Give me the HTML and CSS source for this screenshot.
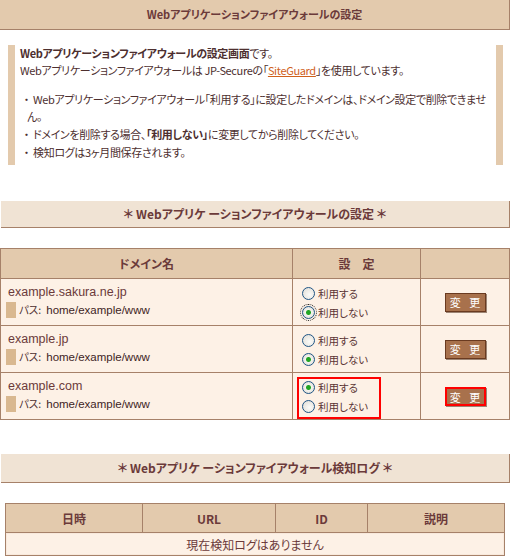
FILE: index.html
```html
<!DOCTYPE html>
<html lang="ja">
<head>
    <meta charset="UTF-8">
    <title>Webアプリケーションファイアウォールの設定</title>
    <link rel="stylesheet" href="styles.css">
</head>
<body>
    <div class="page-title">Webアプリケーションファイアウォールの設定</div>

    <div class="notice">
        <p><strong>Webアプリケーションファイアウォールの設定画面</strong>です。<br>
        Webアプリケーションファイアウォールは JP-Secureの「<a href="#">SiteGuard</a>」を使用しています。</p>
        <ul>
            <li>Webアプリケーションファイアウォール「利用する」に設定したドメインは、ドメイン設定で削除できません。</li>
            <li>ドメインを削除する場合、<strong>「利用しない」</strong>に変更してから削除してください。</li>
            <li>検知ログは3ヶ月間保存されます。</li>
        </ul>
    </div>

    <div class="section-title">＊ Webアプリケ ーションファイアウォールの設定 ＊</div>

    <table class="domain-table">
        <thead>
            <tr>
                <th class="col-domain">ドメイン名</th>
                <th class="col-setting">設　定</th>
                <th class="col-action"></th>
            </tr>
        </thead>
        <tbody>
            <tr>
                <td class="domain">
                    <div class="domain-name">example.sakura.ne.jp</div>
                    <div class="domain-path"><span class="mark"></span>パス: <span class="path">home/example/www</span></div>
                </td>
                <td class="setting">
                    <div class="choice">
                        <label><input type="radio" name="waf1">利用する</label>
                        <label><input type="radio" name="waf1" class="focused" checked>利用しない</label>
                    </div>
                </td>
                <td class="action"><button>変 更</button></td>
            </tr>
            <tr>
                <td class="domain">
                    <div class="domain-name">example.jp</div>
                    <div class="domain-path"><span class="mark"></span>パス: <span class="path">home/example/www</span></div>
                </td>
                <td class="setting">
                    <div class="choice">
                        <label><input type="radio" name="waf2">利用する</label>
                        <label><input type="radio" name="waf2" checked>利用しない</label>
                    </div>
                </td>
                <td class="action"><button>変 更</button></td>
            </tr>
            <tr>
                <td class="domain">
                    <div class="domain-name">example.com</div>
                    <div class="domain-path"><span class="mark"></span>パス: <span class="path">home/example/www</span></div>
                </td>
                <td class="setting">
                    <div class="choice marked">
                        <label><input type="radio" name="waf3" checked>利用する</label>
                        <label><input type="radio" name="waf3">利用しない</label>
                    </div>
                </td>
                <td class="action"><button class="marked">変 更</button></td>
            </tr>
        </tbody>
    </table>

    <div class="section-title log-title">＊ Webアプリケ ーションファイアウォール検知ログ ＊</div>

    <table class="log-table">
        <thead>
            <tr>
                <th class="col-date">日時</th>
                <th class="col-url">URL</th>
                <th class="col-id">ID</th>
                <th>説明</th>
            </tr>
        </thead>
        <tbody>
            <tr>
                <td colspan="4">現在検知ログはありません</td>
            </tr>
        </tbody>
    </table>
</body>
</html>
```

FILE: styles.css
```css
body {
    margin: 0;
    width: 510px;
    font-family: "Noto Sans CJK JP", sans-serif;
    font-feature-settings: "palt";
    font-size: 12px;
    color: #6b3a3a;
    background: #fff;
}
.page-title {
    height: 29px;
    line-height: 29px;
    background-color: #e3caad;
    border-bottom: 1px solid #a68169;
    border-right: 1px solid #a68169;
    text-align: center;
    font-weight: bold;
    font-size: 11px;
}
.notice {
    margin: 15px 7px 0 8px;
    border-left: 7px solid #e3caad;
    border-right: 7px solid #e3caad;
    padding: 0 2px 4px 5px;
    line-height: 17px;
    font-size: 11px;
    letter-spacing: -0.35px;
    color: #4d2f2f;
}
.notice p {
    margin: 0;
}
.notice a {
    color: #d0611c;
}
.notice ul {
    list-style: none;
    margin: 12px 0 0;
    padding: 0 0 0 7px;
}
.notice li {
    text-indent: -6px;
}
.notice li + li {
    margin-top: 1px;
}
.notice li::before {
    content: "・";
    display: inline-block;
    width: 12px;
    text-indent: 0;
    font-feature-settings: normal;
}
.section-title {
    margin: 36px 0 0 1px;
    height: 26px;
    line-height: 26px;
    background-color: #f0e3d4;
    border-bottom: 1px solid #a68169;
    border-right: 1px solid #a68169;
    text-align: center;
    font-weight: bold;
    font-size: 12px;
}
.log-title {
    margin-top: 34px;
    height: 28px;
    line-height: 28px;
}
table {
    border-collapse: collapse;
}
th, td {
    border: 1px solid #a68169;
    padding: 0;
}
th {
    background-color: #e3caad;
    font-weight: bold;
    font-size: 12px;
}
td {
    background-color: #fdf1e6;
}
.domain-table {
    width: 510px;
    margin-top: 20px;
}
.domain-table th {
    height: 29px;
}
.col-domain {
    width: 291px;
}
.col-setting {
    width: 127px;
}
.domain {
    vertical-align: top;
    padding: 5px 0 0 5px;
}
.domain-name {
    margin-left: 2px;
    line-height: 16px;
    font-family: "Liberation Sans", "Noto Sans CJK JP", sans-serif;
    font-size: 12.5px;
    color: #6b3a3a;
}
.domain-path {
    display: flex;
    align-items: center;
    height: 17px;
    margin-top: 1px;
    font-size: 10.5px;
    color: #4d2f2f;
}
.mark {
    width: 10px;
    height: 16px;
    margin-right: 3px;
    background-color: #d9b890;
}
.path {
    margin-left: 5px;
    font-family: "Liberation Sans", sans-serif;
    font-size: 11.5px;
    color: #3d2424;
}
.setting {
    vertical-align: top;
    padding: 4px 0 0 4px;
}
.choice {
    display: inline-block;
    width: 77px;
    height: 38px;
    padding-left: 3px;
    border: 2px solid transparent;
    font-size: 10.5px;
}
.choice.marked {
    border-color: #f00;
}
.choice label {
    display: flex;
    align-items: center;
    height: 16px;
    margin-bottom: 3px;
    color: #5a3434;
}
.choice input {
    appearance: none;
    width: 13px;
    height: 13px;
    margin: 0 3px 0 0;
    border: 1px solid #1f5585;
    border-radius: 50%;
    background: radial-gradient(circle at 60% 60%, #fbfbf9 0, #dedbd3 100%);
}
.choice input:checked {
    background: radial-gradient(circle, #22a524 0, #22a524 2px, #f4f3ef 3px, #d8d5cc 100%);
}
.choice input.focused {
    outline: 1px dotted #222;
    outline-offset: 1px;
}
.action {
    text-align: center;
    vertical-align: middle;
}
button {
    width: 41px;
    height: 19px;
    padding: 0;
    background-color: #a8714c;
    border: 1px solid #6a3a20;
    box-shadow: 1px 1px 0 #9c8474;
    color: #fff;
    font-family: "Noto Sans CJK JP", sans-serif;
    font-size: 11px;
    letter-spacing: 3px;
    text-indent: 3px;
    cursor: pointer;
}
button.marked {
    border: 2px solid #f00;
}
.log-table {
    width: 500px;
    margin: 20px 0 0 5px;
}
.log-table th {
    height: 28px;
}
.col-date {
    width: 136px;
}
.col-url {
    width: 132px;
}
.col-id {
    width: 91px;
}
.log-table td {
    height: 22px;
    text-align: center;
    box-shadow: inset 0 0 0 1px #f8e9dc;
    color: #6b3a3a;
}
```
